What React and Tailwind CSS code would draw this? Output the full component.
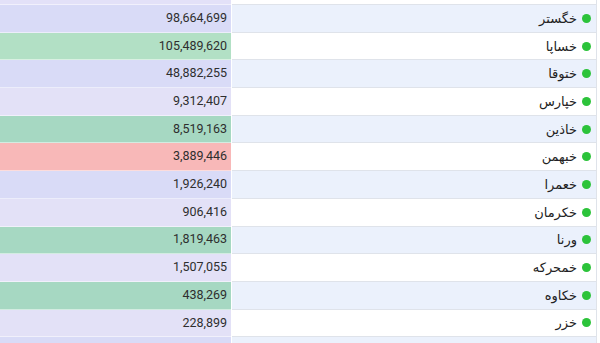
import React from "react";

const rows = [
  { v: "", n: "", l: "bg-[#e3e1f8]", r: "bg-white" },
  { v: "98,664,699", n: "خگستر", l: "bg-[#d9dbf7]", r: "bg-[#ebf1fc]" },
  { v: "105,489,620", n: "خساپا", l: "bg-[#b2e0c5]", r: "bg-white" },
  { v: "48,882,255", n: "ختوقا", l: "bg-[#d9dbf7]", r: "bg-[#ebf1fc]" },
  { v: "9,312,407", n: "خپارس", l: "bg-[#e3e1f7]", r: "bg-white" },
  { v: "8,519,163", n: "خاذین", l: "bg-[#a6d8c2]", r: "bg-[#ebf1fc]" },
  { v: "3,889,446", n: "خبهمن", l: "bg-[#f8b8b8]", r: "bg-white" },
  { v: "1,926,240", n: "خعمرا", l: "bg-[#d9dbf7]", r: "bg-[#ebf1fc]" },
  { v: "906,416", n: "خکرمان", l: "bg-[#e3e1f7]", r: "bg-white" },
  { v: "1,819,463", n: "ورنا", l: "bg-[#a6d8c2]", r: "bg-[#ebf1fc]" },
  { v: "1,507,055", n: "خمحرکه", l: "bg-[#e3e1f7]", r: "bg-white" },
  { v: "438,269", n: "خکاوه", l: "bg-[#a6d8c2]", r: "bg-[#ebf1fc]" },
  { v: "228,899", n: "خزر", l: "bg-[#e3e1f7]", r: "bg-white" },
  { v: "", n: "", l: "bg-[#d9dbf7]", r: "bg-[#ebf1fc]" },
];

export default function App() {
  return (
    <div
      className="w-[600px] h-[343px] overflow-hidden bg-white"
      style={{ fontFamily: '"Noto Sans", "DejaVu Sans", sans-serif' }}
    >
      <div className="-mt-[22.7px] flex flex-col">
        {rows.map((row, i) => (
          <div key={i} className="flex h-[27.7px]">
            <div
              className={`w-[231px] ${row.l} border-b border-white/50 flex items-center justify-end pr-[4px] text-[12.5px] text-[#2e2e2e]`}
              style={{ fontFamily: 'Roboto, "Noto Sans", sans-serif' }}
            >
              {row.v}
            </div>
            <div className="w-[1px] bg-white/70" />
            <div
              className={`w-[365px] ${row.r} border-b border-r border-[#dfe3ea] flex items-center justify-end pr-[5px] gap-[5px]`}
            >
              {row.n && (
                <>
                  <span dir="rtl" className="text-[13px] text-[#222] leading-none">
                    {row.n}
                  </span>
                  <span className="w-[9px] h-[9px] rounded-full bg-[#2cc33a] shrink-0" />
                </>
              )}
            </div>
          </div>
        ))}
      </div>
    </div>
  );
}
